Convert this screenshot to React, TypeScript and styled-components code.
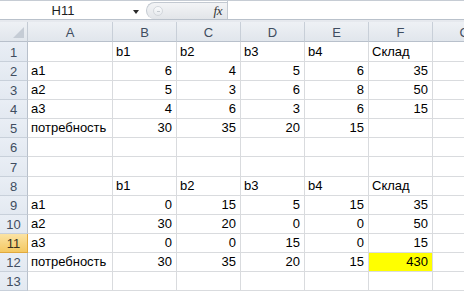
import React from "react";
import styled, { createGlobalStyle, css } from "styled-components";

const GlobalStyle = createGlobalStyle`
  html, body {
    margin: 0;
    padding: 0;
    background: #ffffff;
    overflow: hidden;
  }
  * {
    box-sizing: border-box;
  }
`;

const Window = styled.div`
  width: 464px;
  height: 291px;
  overflow: hidden;
  display: flex;
  flex-direction: column;
  font-family: "Liberation Sans", Arial, sans-serif;
  background: #ffffff;
`;

const FormulaBar = styled.div`
  display: flex;
  height: 23px;
  border-top: 1px solid #c6ccd4;
  border-bottom: 1px solid #b9c1cb;
  background: #ffffff;
`;

const NameBox = styled.div`
  position: relative;
  width: 146px;
  display: flex;
  align-items: center;
  justify-content: center;
  font-size: 13px;
  color: #1e1e1e;
  padding-right: 20px;
`;

const DropArrow = styled.span`
  position: absolute;
  right: 7px;
  top: 9px;
  width: 0;
  height: 0;
  border-left: 3px solid transparent;
  border-right: 3px solid transparent;
  border-top: 4px solid #2a2a2a;
`;

const FxPill = styled.div`
  width: 81px;
  margin-top: 1px;
  display: flex;
  align-items: center;
  justify-content: space-between;
  padding: 0 5px 0 6px;
  border: 1px solid #c3c9d1;
  border-right: none;
  border-bottom: none;
  border-radius: 11px 0 0 11px;
  background: linear-gradient(#f3f4f6, #e2e5e9);
`;

const Grip = styled.span`
  width: 10px;
  height: 10px;
  border-radius: 50%;
  border: 1px solid #d3d7dc;
  background: linear-gradient(#fafbfc, #e7eaee);
  display: flex;
  align-items: center;
  justify-content: center;
  &::after {
    content: "";
    width: 3px;
    height: 1px;
    background: #c4c9cf;
  }
`;

const Fx = styled.span`
  font-family: "Liberation Serif", "Times New Roman", serif;
  font-style: italic;
  font-size: 13px;
  color: #333333;
  letter-spacing: -0.5px;
`;

const FormulaInput = styled.div`
  flex: 1;
  border-left: 1px solid #c3c9d1;
  background: #ffffff;
`;

const Band = styled.div`
  height: 2px;
  background: #e6e9ee;
`;

const Sheet = styled.div`
  display: flex;
  flex-direction: column;
`;

const Row = styled.div<{ $h: number }>`
  display: flex;
  flex: none;
  height: ${(p) => p.$h}px;
`;

const headBg = css`
  background: linear-gradient(#eef1f5, #e1e6ec);
  color: #3f4d60;
  font-size: 13px;
  display: flex;
  align-items: center;
  justify-content: center;
`;

const Corner = styled.div`
  ${headBg};
  position: relative;
  width: 28px;
  flex: none;
  border-right: 1px solid #c4cbd4;
  border-bottom: 1px solid #b8c0cb;
  &::after {
    content: "";
    position: absolute;
    right: 3px;
    bottom: 3px;
    width: 0;
    height: 0;
    border-left: 11px solid transparent;
    border-bottom: 11px solid #c5ccd5;
  }
`;

const ColHead = styled.div<{ $w: number }>`
  ${headBg};
  width: ${(p) => p.$w}px;
  flex: none;
  border-right: 1px solid #c8cfd8;
  border-bottom: 1px solid #b8c0cb;
  padding-top: 1px;
`;

const RowHead = styled.div<{ $active?: boolean }>`
  ${headBg};
  width: 28px;
  flex: none;
  background: linear-gradient(#e9eef5, #e3e9f1);
  border-right: 1px solid #b8c0cb;
  border-bottom: 1px solid #c8d0da;
  padding-top: 1px;
  ${(p) =>
    p.$active &&
    css`
      background: linear-gradient(#fbe3a4, #f4c862);
      border-right-color: #e1a93d;
      border-bottom-color: #e1a93d;
      color: #3a3020;
    `}
`;

const Cell = styled.div<{ $w: number; $num?: boolean; $hl?: boolean }>`
  width: ${(p) => p.$w}px;
  flex: none;
  border-right: 1px solid #d9dbde;
  border-bottom: 1px solid #d9dbde;
  font-size: 13px;
  color: #000000;
  white-space: nowrap;
  overflow: visible;
  display: flex;
  align-items: flex-end;
  padding: 0 4px 2px 3px;
  line-height: 15px;
  justify-content: ${(p) => (p.$num ? "flex-end" : "flex-start")};
  background: ${(p) => (p.$hl ? "#ffff00" : "transparent")};
`;

const colWidths = [85, 64, 64, 64, 64, 64, 64];
const colNames = ["A", "B", "C", "D", "E", "F", "G"];
const rowHeights = [20, 19, 19, 19, 19, 19, 20, 19, 19, 19, 19, 19, 19];

type Val = string | number | null;

const data: Val[][] = [
  [null, "b1", "b2", "b3", "b4", "Склад", null],
  ["a1", 6, 4, 5, 6, 35, null],
  ["a2", 5, 3, 6, 8, 50, null],
  ["a3", 4, 6, 3, 6, 15, null],
  ["потребность", 30, 35, 20, 15, null, null],
  [null, null, null, null, null, null, null],
  [null, null, null, null, null, null, null],
  [null, "b1", "b2", "b3", "b4", "Склад", null],
  ["a1", 0, 15, 5, 15, 35, null],
  ["a2", 30, 20, 0, 0, 50, null],
  ["a3", 0, 0, 15, 0, 15, null],
  ["потребность", 30, 35, 20, 15, 430, null],
  [null, null, null, null, null, null, null],
];

const App: React.FC = () => {
  return (
    <Window>
      <GlobalStyle />
      <FormulaBar>
        <NameBox>
          H11
          <DropArrow />
        </NameBox>
        <FxPill>
          <Grip />
          <Fx>fx</Fx>
        </FxPill>
        <FormulaInput />
      </FormulaBar>
      <Band />
      <Sheet>
        <Row $h={20}>
          <Corner />
          {colNames.map((n, i) => (
            <ColHead key={n} $w={colWidths[i]}>
              {n}
            </ColHead>
          ))}
        </Row>
        {data.map((row, r) => (
          <Row key={r} $h={rowHeights[r]}>
            <RowHead $active={r === 10}>{r + 1}</RowHead>
            {row.map((v, c) => (
              <Cell
                key={c}
                $w={colWidths[c]}
                $num={typeof v === "number"}
                $hl={r === 11 && c === 5}
              >
                {v}
              </Cell>
            ))}
          </Row>
        ))}
      </Sheet>
    </Window>
  );
};

export default App;
